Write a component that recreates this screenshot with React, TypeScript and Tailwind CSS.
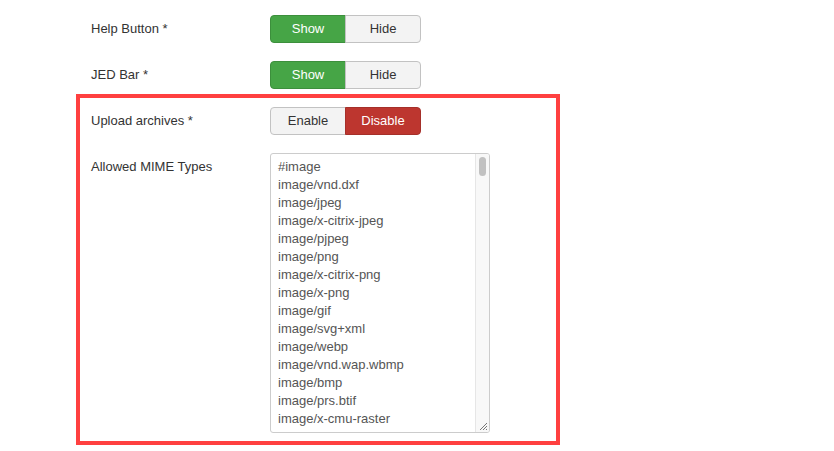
const mimeTypes = [
  "#image",
  "image/vnd.dxf",
  "image/jpeg",
  "image/x-citrix-jpeg",
  "image/pjpeg",
  "image/png",
  "image/x-citrix-png",
  "image/x-png",
  "image/gif",
  "image/svg+xml",
  "image/webp",
  "image/vnd.wap.wbmp",
  "image/bmp",
  "image/prs.btif",
  "image/x-cmu-raster",
  "image/x-ms-bmp",
];

type Tone = "green" | "red";

function Toggle({
  left,
  right,
  active,
  tone,
}: {
  left: string;
  right: string;
  active: 0 | 1;
  tone: Tone;
}) {
  const on =
    tone === "green"
      ? "bg-[#46a546] border-[#3c8f3c] text-white"
      : "bg-[#bd362f] border-[#a5302a] text-white";
  const off = "bg-[#f3f3f3] border-[#c2c2c2] text-[#333]";
  return (
    <div className="flex h-[28px] w-[151px]">
      <button
        className={`w-[76px] rounded-l-[4px] border text-[13px] ${active === 0 ? on : off}`}
      >
        {left}
      </button>
      <button
        className={`-ml-px w-[76px] rounded-r-[4px] border text-[13px] ${active === 1 ? on : off}`}
      >
        {right}
      </button>
    </div>
  );
}

function Row({ label, children }: { label: string; children: React.ReactNode }) {
  return (
    <div className="flex">
      <div className="w-[179px] pt-[5px] text-[13px] leading-[18px] text-[#333]">{label}</div>
      {children}
    </div>
  );
}

export default function App() {
  return (
    <div
      className="h-[451px] w-[834px] bg-white pt-[15px]"
      style={{ fontFamily: '"Liberation Sans", Arial, sans-serif' }}
    >
      <div className="flex flex-col gap-[18px] pl-[91px]">
        <Row label="Help Button *">
          <Toggle left="Show" right="Hide" active={0} tone="green" />
        </Row>
        <Row label="JED Bar *">
          <Toggle left="Show" right="Hide" active={0} tone="green" />
        </Row>
      </div>

      <div className="ml-[76px] mt-[5px] flex w-[484px] flex-col gap-[18px] border-4 border-[#ff4040] pb-[8px] pl-[11px] pt-[9px]">
        <Row label="Upload archives *">
          <Toggle left="Enable" right="Disable" active={1} tone="red" />
        </Row>
        <Row label="Allowed MIME Types">
          <div className="relative flex h-[280px] w-[220px] overflow-hidden rounded-[3px] border border-[#cccccc] bg-white">
            <div className="flex-1 overflow-hidden pl-[7px] pt-[4px] text-[13px] leading-[18px] text-[#555]">
              {mimeTypes.map((m) => (
                <div key={m}>{m}</div>
              ))}
            </div>
            <div className="flex w-[14px] flex-col border-l border-[#e6e6e6] bg-[#f8f8f8] px-[3px] pt-[3px]">
              <div className="h-[19px] w-[7px] rounded-full bg-[#c1c1c1]" />
            </div>
            <svg
              className="absolute bottom-[1px] right-[1px]"
              width="10"
              height="10"
              viewBox="0 0 10 10"
            >
              <path d="M9 2 L2 9 M9 5 L5 9 M9 8 L8 9" stroke="#777" strokeWidth="1" />
            </svg>
          </div>
        </Row>
      </div>
    </div>
  );
}
